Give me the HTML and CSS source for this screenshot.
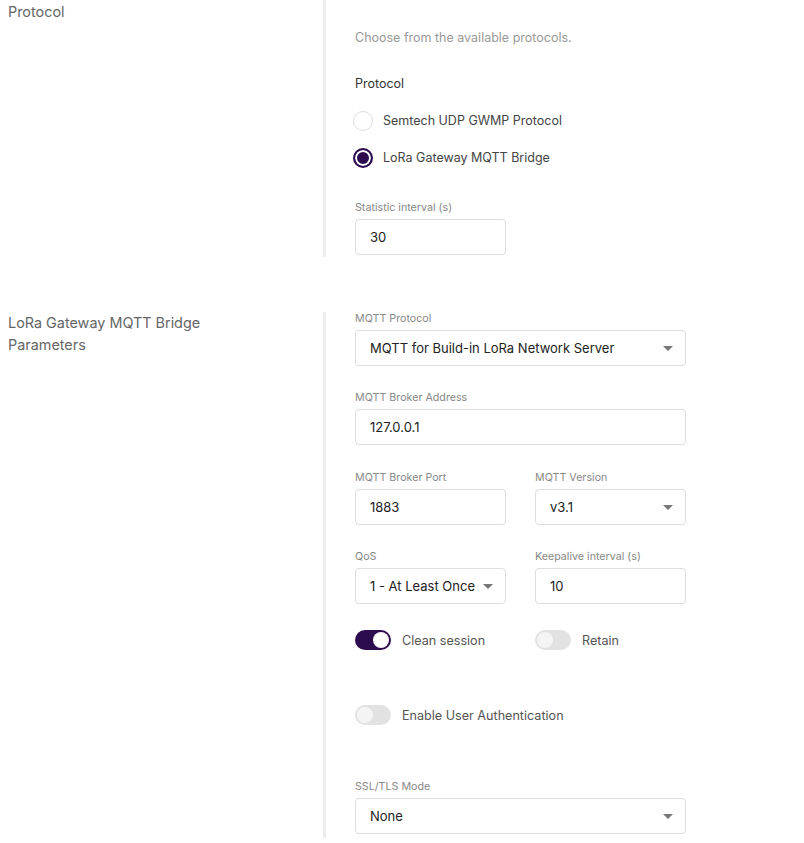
FILE: index.html
```html
<!DOCTYPE html>
<html>
<head>
<meta charset="utf-8">
<link rel="stylesheet" href="styles.css">
</head>
<body>
<div class="page">
  <section class="section s1">
    <div class="side">Protocol</div>
    <div class="divider"></div>
    <div class="main">
      <p class="desc">Choose from the available protocols.</p>
      <div class="group-title">Protocol</div>
      <div class="radios">
        <label class="radio"><span class="dot"></span><span>Semtech UDP GWMP Protocol</span></label>
        <label class="radio checked"><span class="dot"></span><span>LoRa Gateway MQTT Bridge</span></label>
      </div>
      <div class="field last">
        <div class="label">Statistic interval (s)</div>
        <div class="input half">30</div>
      </div>
    </div>
  </section>

  <section class="section s2">
    <div class="side">LoRa Gateway MQTT Bridge<br>Parameters</div>
    <div class="divider"></div>
    <div class="main">
      <div class="field">
        <div class="label">MQTT Protocol</div>
        <div class="input select">MQTT for Build-in LoRa Network Server<span class="caret"></span></div>
      </div>
      <div class="field wide-gap">
        <div class="label">MQTT Broker Address</div>
        <div class="input">127.0.0.1</div>
      </div>
      <div class="row">
        <div class="field">
          <div class="label">MQTT Broker Port</div>
          <div class="input half">1883</div>
        </div>
        <div class="field">
          <div class="label">MQTT Version</div>
          <div class="input half select">v3.1<span class="caret"></span></div>
        </div>
      </div>
      <div class="row">
        <div class="field">
          <div class="label">QoS</div>
          <div class="input half select">1 - At Least Once<span class="caret"></span></div>
        </div>
        <div class="field">
          <div class="label">Keepalive interval (s)</div>
          <div class="input half">10</div>
        </div>
      </div>
      <div class="row toggles">
        <div class="toggle-item"><span class="switch on"><span class="knob"></span></span><span>Clean session</span></div>
        <div class="toggle-item"><span class="switch"><span class="knob"></span></span><span>Retain</span></div>
      </div>
      <div class="row toggles auth">
        <div class="toggle-item"><span class="switch"><span class="knob"></span></span><span>Enable User Authentication</span></div>
      </div>
      <div class="field last">
        <div class="label">SSL/TLS Mode</div>
        <div class="input select">None<span class="caret"></span></div>
      </div>
    </div>
  </section>
</div>
</body>
</html>
```

FILE: styles.css
```css
* { box-sizing: border-box; }
html, body { margin: 0; padding: 0; background: #fff; }
body { font-family: Inter, "Noto Sans", sans-serif; color: #333; }

.page { display: flex; flex-direction: column; gap: 55px; }

.section { display: flex; align-items: stretch; }
.side {
  width: 323px;
  padding-left: 8px;
  font-size: 14.4px;
  line-height: 22px;
  color: #666;
}
.s1 .side { padding-top: 1px; }
.divider { width: 3px; background: #eeeeee; flex: none; }
.main { padding-left: 29px; width: 360px; }

.s1 .main { padding-top: 29px; padding-bottom: 2px; }
.s2 .main { padding-bottom: 4px; }

.desc { margin: 0; font-size: 12.5px; line-height: 18px; color: #999; }
.group-title { margin-top: 28px; font-size: 12.5px; line-height: 18px; color: #333; margin-bottom: 9px; }

.radios { display: flex; flex-direction: column; margin-bottom: 25px; }
.radio { display: flex; align-items: center; height: 37px; gap: 10px; font-size: 12.5px; color: #444; }
.radio .dot {
  width: 20px; height: 20px; border-radius: 50%;
  border: 1px solid #dddddd; background: #fff; flex: none;
  margin-left: -2px;
}
.radio.checked .dot {
  border: 2px solid #2d0b4f;
  box-shadow: inset 0 0 0 2px #fff;
  background: #2d0b4f;
}

.field { margin-bottom: 25px; }
.field.wide-gap { margin-bottom: 26px; }
.field.last { margin-bottom: 0; }
.label { font-size: 10.7px; line-height: 13px; color: #888; margin-bottom: 5px; }
.input {
  position: relative;
  width: 331px; height: 36px;
  border: 1px solid #dddddd; border-radius: 4px;
  padding-left: 14px;
  display: flex; align-items: center;
  font-size: 13px; color: #222;
  white-space: nowrap;
}
.input.half { width: 151px; }
.caret {
  position: absolute; right: 12px; top: 50%; margin-top: -2px;
  width: 0; height: 0;
  border-left: 5px solid transparent; border-right: 5px solid transparent;
  border-top: 5px solid #777;
}

.row { display: flex; gap: 29px; }
.row .field { width: 151px; }

.toggles { height: 22px; align-items: center; margin-bottom: 53px; }
.toggles.auth { margin-bottom: 54px; }
.toggle-item { width: 151px; display: flex; align-items: center; gap: 11px; font-size: 12.6px; color: #555; white-space: nowrap; }
.switch {
  width: 36px; height: 20px; border-radius: 10px; background: #e2e2e2;
  display: flex; align-items: center; padding: 0 2px; flex: none;
}
.switch .knob { width: 16px; height: 16px; border-radius: 50%; background: #f4f4f4; }
.switch.on { background: #2d0b4f; justify-content: flex-end; }
.switch.on .knob { background: #fff; }
```
